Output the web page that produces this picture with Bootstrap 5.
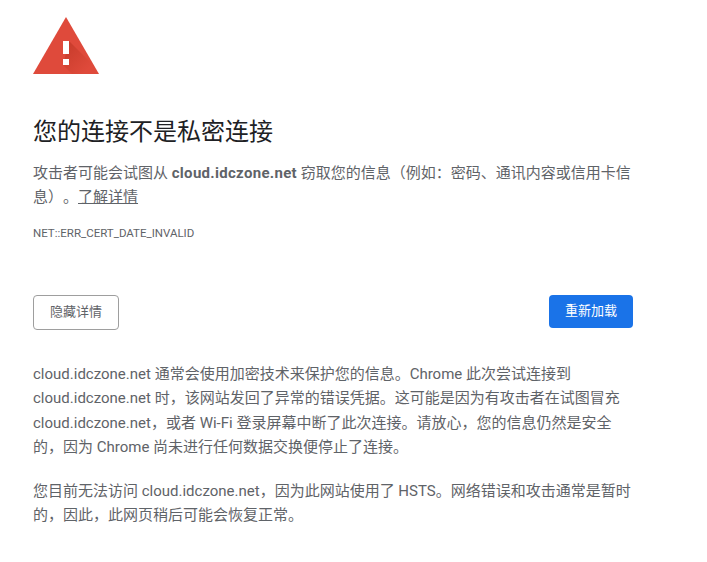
<!DOCTYPE html>
<html lang="zh-CN">
<head>
    <meta charset="UTF-8">
    <meta name="viewport" content="width=device-width, initial-scale=1.0">
    <title>隐私设置错误</title>
    <link href="https://cdn.jsdelivr.net/npm/bootstrap@5.3.3/dist/css/bootstrap.min.css" rel="stylesheet">
    <style>
        html, body { height: 100%; overflow: hidden; }
        body { background: #fff; color: #5f6368; font-family: Roboto, "Noto Sans CJK SC", sans-serif; font-size: 15px; text-spacing-trim: space-all; }
        .err-wrap { width: 600px; margin-left: 33px; padding-top: 17px; }
        .err-icon { display: block; width: 66px; height: 57px; margin-bottom: 42px; }
        .err-title { color: #202124; font-size: 24px; font-weight: 400; line-height: 32px; margin-bottom: 13px; }
        .err-text { line-height: 24px; margin-bottom: 0; }
        .err-text b { color: #5f6368; font-weight: 700; letter-spacing: .3px; }
        .err-text a { color: #5f6368; }
        .err-code { font-size: 11.5px; line-height: 16px; margin-top: 16px; text-transform: uppercase; }
        .err-actions { margin-top: 54px; }
        .btn-details, .btn-reload { font-size: 13px; line-height: 16px; border-radius: 4px; }
        .btn-details { color: #5f6368; background: #fff; border: 1px solid #9e9e9e; padding: 8px 16px 9px; }
        .btn-reload { color: #fff; background: #1a73e8; border: 0; padding: 8px 16px 9px; }
        .err-details { margin-top: 32px; }
        .err-details p { line-height: 24.3px; margin-bottom: 20px; }
    </style>
</head>
<body>
    <div class="err-wrap">
        <svg class="err-icon" viewBox="0 0 66 57">
            <defs>
                <linearGradient id="err-shade" x1="30" y1="25" x2="56" y2="51" gradientUnits="userSpaceOnUse">
                    <stop offset="0" stop-color="#a52714" stop-opacity=".45"/>
                    <stop offset="1" stop-color="#a52714" stop-opacity="0"/>
                </linearGradient>
            </defs>
            <path d="M33 0 L66 57 H0 Z" fill="#df4a3b"/>
            <path d="M36 24 L59 47 L54 57 H39 L30 48 Z" fill="url(#err-shade)"/>
            <rect x="30" y="24" width="6" height="13" fill="#fff"/>
            <rect x="30" y="42" width="6" height="6" fill="#fff"/>
        </svg>
        <h1 class="err-title">您的连接不是私密连接</h1>
        <p class="err-text">攻击者可能会试图从 <b>cloud.idczone.net</b> 窃取您的信息（例如：密码、通讯内容或信用卡信息）。<a href="#">了解详情</a></p>
        <div class="err-code">net::ERR_CERT_DATE_INVALID</div>
        <div class="err-actions d-flex justify-content-between align-items-start">
            <button class="btn btn-details" type="button">隐藏详情</button>
            <button class="btn btn-reload" type="button">重新加载</button>
        </div>
        <div class="err-details">
            <p>cloud.idczone.net 通常会使用加密技术来保护您的信息。Chrome 此次尝试连接到 cloud.idczone.net 时，该网站发回了异常的错误凭据。这可能是因为有攻击者在试图冒充 cloud.idczone.net，或者 Wi-Fi 登录屏幕中断了此次连接。请放心，您的信息仍然是安全的，因为 Chrome 尚未进行任何数据交换便停止了连接。</p>
            <p>您目前无法访问 cloud.idczone.net，因为此网站使用了 HSTS。网络错误和攻击通常是暂时的，因此，此网页稍后可能会恢复正常。</p>
        </div>
    </div>
    <script src="https://cdn.jsdelivr.net/npm/bootstrap@5.3.3/dist/js/bootstrap.bundle.min.js"></script>
</body>
</html>
